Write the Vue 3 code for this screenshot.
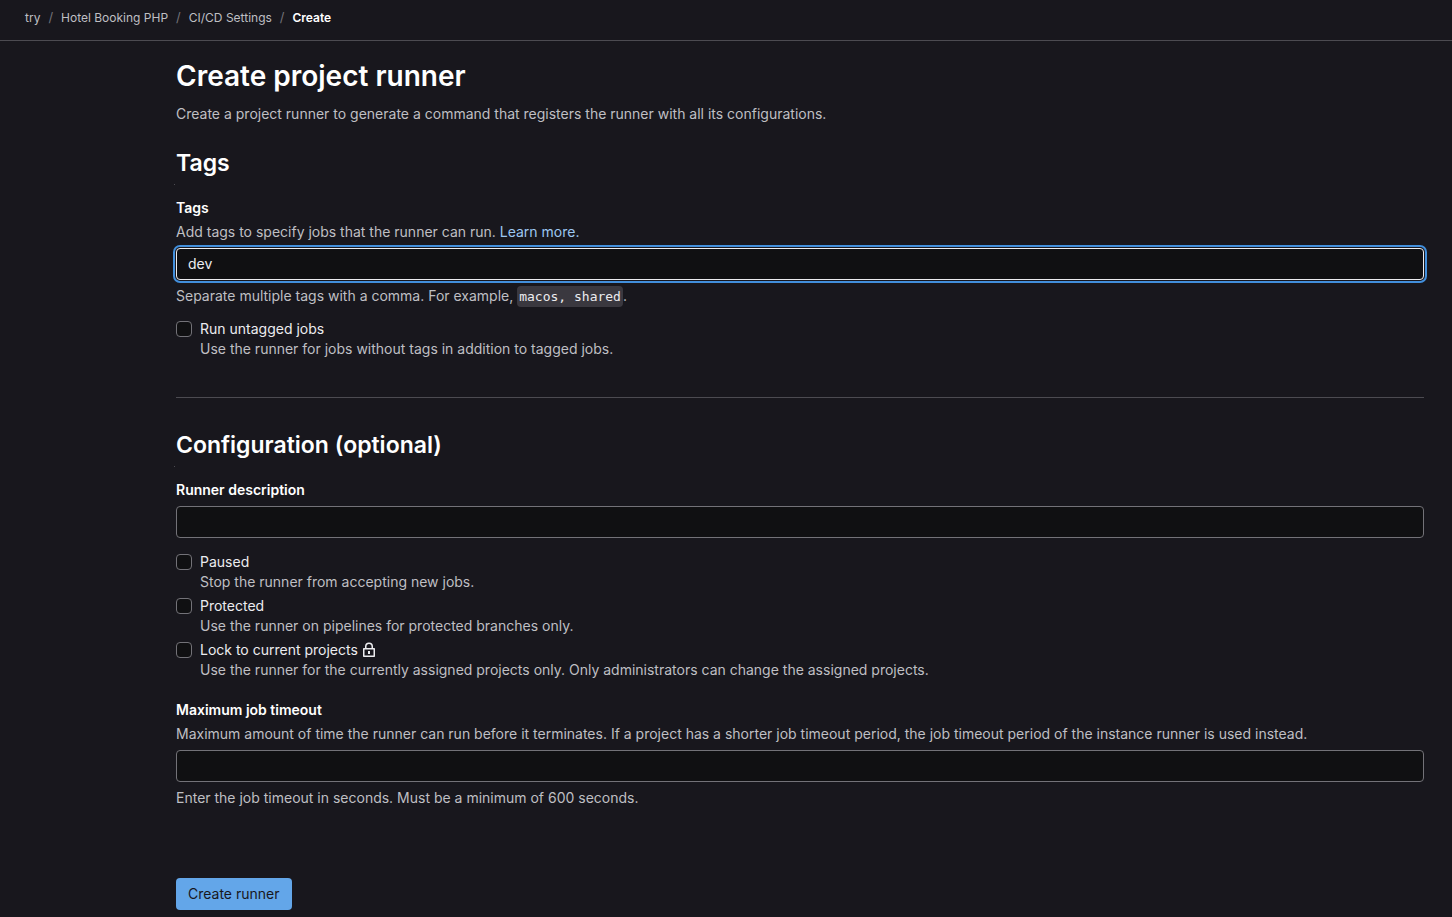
<script setup>
import { ref } from 'vue'

const crumbs = ['try', 'Hotel Booking PHP', 'CI/CD Settings']
const tags = ref('dev')
const description = ref('')
const timeout = ref('')
const options = [
  { id: 'paused', label: 'Paused', help: 'Stop the runner from accepting new jobs.' },
  { id: 'protected', label: 'Protected', help: 'Use the runner on pipelines for protected branches only.' },
  { id: 'locked', label: 'Lock to current projects', lock: true, help: 'Use the runner for the currently assigned projects only. Only administrators can change the assigned projects.' },
]
</script>

<template>
  <div class="page">
    <nav class="topbar" aria-label="Breadcrumbs">
      <ol>
        <li v-for="c in crumbs" :key="c"><a href="#">{{ c }}</a></li>
        <li><a href="#" class="current" aria-current="page">Create</a></li>
      </ol>
    </nav>
    <main>
      <h1>Create project runner</h1>
      <p class="intro">Create a project runner to generate a command that registers the runner with all its configurations.</p>
      <form @submit.prevent>
        <h2>Tags</h2>
        <div class="field">
          <label class="name" for="tags">Tags</label>
          <p class="hint">Add tags to specify jobs that the runner can run. <a href="#">Learn more.</a></p>
          <input id="tags" v-model="tags" class="text focused" type="text" />
          <p class="note">Separate multiple tags with a comma. For example, <code>macos, shared</code>.</p>
        </div>
        <div class="option">
          <input id="untagged" type="checkbox" />
          <div>
            <label for="untagged">Run untagged jobs</label>
            <p>Use the runner for jobs without tags in addition to tagged jobs.</p>
          </div>
        </div>
        <hr />
        <h2>Configuration (optional)</h2>
        <div class="field">
          <label class="name" for="description">Runner description</label>
          <input id="description" v-model="description" class="text" type="text" />
        </div>
        <div v-for="o in options" :key="o.id" class="option">
          <input :id="o.id" type="checkbox" />
          <div>
            <label :for="o.id">{{ o.label }}
              <svg v-if="o.lock" width="16" height="16" viewBox="0 0 16 16" aria-hidden="true">
                <path d="M3.75 6V4.5a3 3 0 0 1 6.5 0V6M1.75 6.75h10.5v7.5H1.75z" fill="none" stroke="currentColor" stroke-width="1.5" stroke-linejoin="round" />
                <path d="M6 9h2v3H6z" fill="currentColor" />
              </svg>
            </label>
            <p>{{ o.help }}</p>
          </div>
        </div>
        <div class="field timeout">
          <label class="name" for="timeout">Maximum job timeout</label>
          <p class="hint">Maximum amount of time the runner can run before it terminates. If a project has a shorter job timeout period, the job timeout period of the instance runner is used instead.</p>
          <input id="timeout" v-model="timeout" class="text" type="text" />
          <p class="note">Enter the job timeout in seconds. Must be a minimum of 600 seconds.</p>
        </div>
        <button type="submit">Create runner</button>
      </form>
    </main>
  </div>
</template>

<style>
body {
  background: #18171d;
}
</style>

<style scoped>
.page {
  color: #ececef;
  font: 14px/20px Inter, "Noto Sans", sans-serif;
}
.page * {
  box-sizing: border-box;
}
.topbar {
  height: 41px;
  padding: 10px 25px;
  border-bottom: 1px solid #4c4b51;
  font-size: 12px;
  line-height: 16px;
}
ol {
  display: flex;
  margin: 0;
  padding: 0;
  list-style: none;
}
li + li::before {
  content: "/";
  margin: 0 8px;
  color: #737278;
  font-size: 13px;
  line-height: 1;
}
li a {
  color: #bfbfc3;
  text-decoration: none;
}
li .current {
  color: #fff;
  font-weight: 600;
}
main {
  padding: 19px 28px 7px 176px;
}
h1, h2, p {
  margin: 0;
}
h1, h2 {
  color: #fff;
  font-weight: 600;
}
h1 {
  font-size: 28px;
  line-height: 32px;
}
.intro {
  margin-top: 12px;
}
h2 {
  position: relative;
  margin-top: 23px;
  font-size: 23px;
  line-height: 32px;
}
h2::after {
  content: "";
  position: absolute;
  left: -2px;
  bottom: -6px;
  width: 1px;
  height: 1px;
  background: #4c4b51;
}
p {
  color: #bfbfc3;
}
p a {
  color: #9dc7f1;
  text-decoration: none;
}
.field {
  margin: 19px 0 14px;
}
.name {
  display: block;
  color: #fff;
  font-weight: 600;
}
.hint {
  margin-top: 4px;
}
.text {
  display: block;
  width: 100%;
  height: 32px;
  margin-top: 6px;
  padding: 0 11px 2px;
  border: 1px solid #737278;
  border-radius: 4px;
  outline: none;
  background: #101012;
  color: #ececef;
  font: inherit;
}
.text.focused {
  border-color: #ececef;
  box-shadow: 0 0 0 1px #18171d, 0 0 0 3px #428fdc;
}
.note {
  height: 20px;
  margin-top: 6px;
}
.note:has(code) {
  margin-bottom: -1px;
}
code {
  padding: 3px 2px;
  border-radius: 4px;
  background: #3a383f;
  color: #ececef;
  font: 13px/16px "DejaVu Sans Mono", monospace;
}
.option {
  display: flex;
  gap: 8px;
  margin-bottom: 4px;
}
.option input {
  appearance: none;
  flex: none;
  width: 16px;
  height: 16px;
  margin: 2px 0;
  border: 1px solid #737278;
  border-radius: 4px;
  background: #101012;
}
.option input:checked {
  background: #63a6e9;
}
.option label {
  display: flex;
  align-items: center;
  gap: 4px;
}
hr {
  margin: 38px 0 31px;
  border: 0;
  border-top: 1px solid #4c4b51;
}
hr + h2 {
  margin: 0;
}
.timeout {
  margin: 20px 0 70px;
}
button {
  height: 32px;
  padding: 0 12px;
  border: 0;
  border-radius: 4px;
  background: #63a6e9;
  color: #18171d;
  font: inherit;
}
</style>
